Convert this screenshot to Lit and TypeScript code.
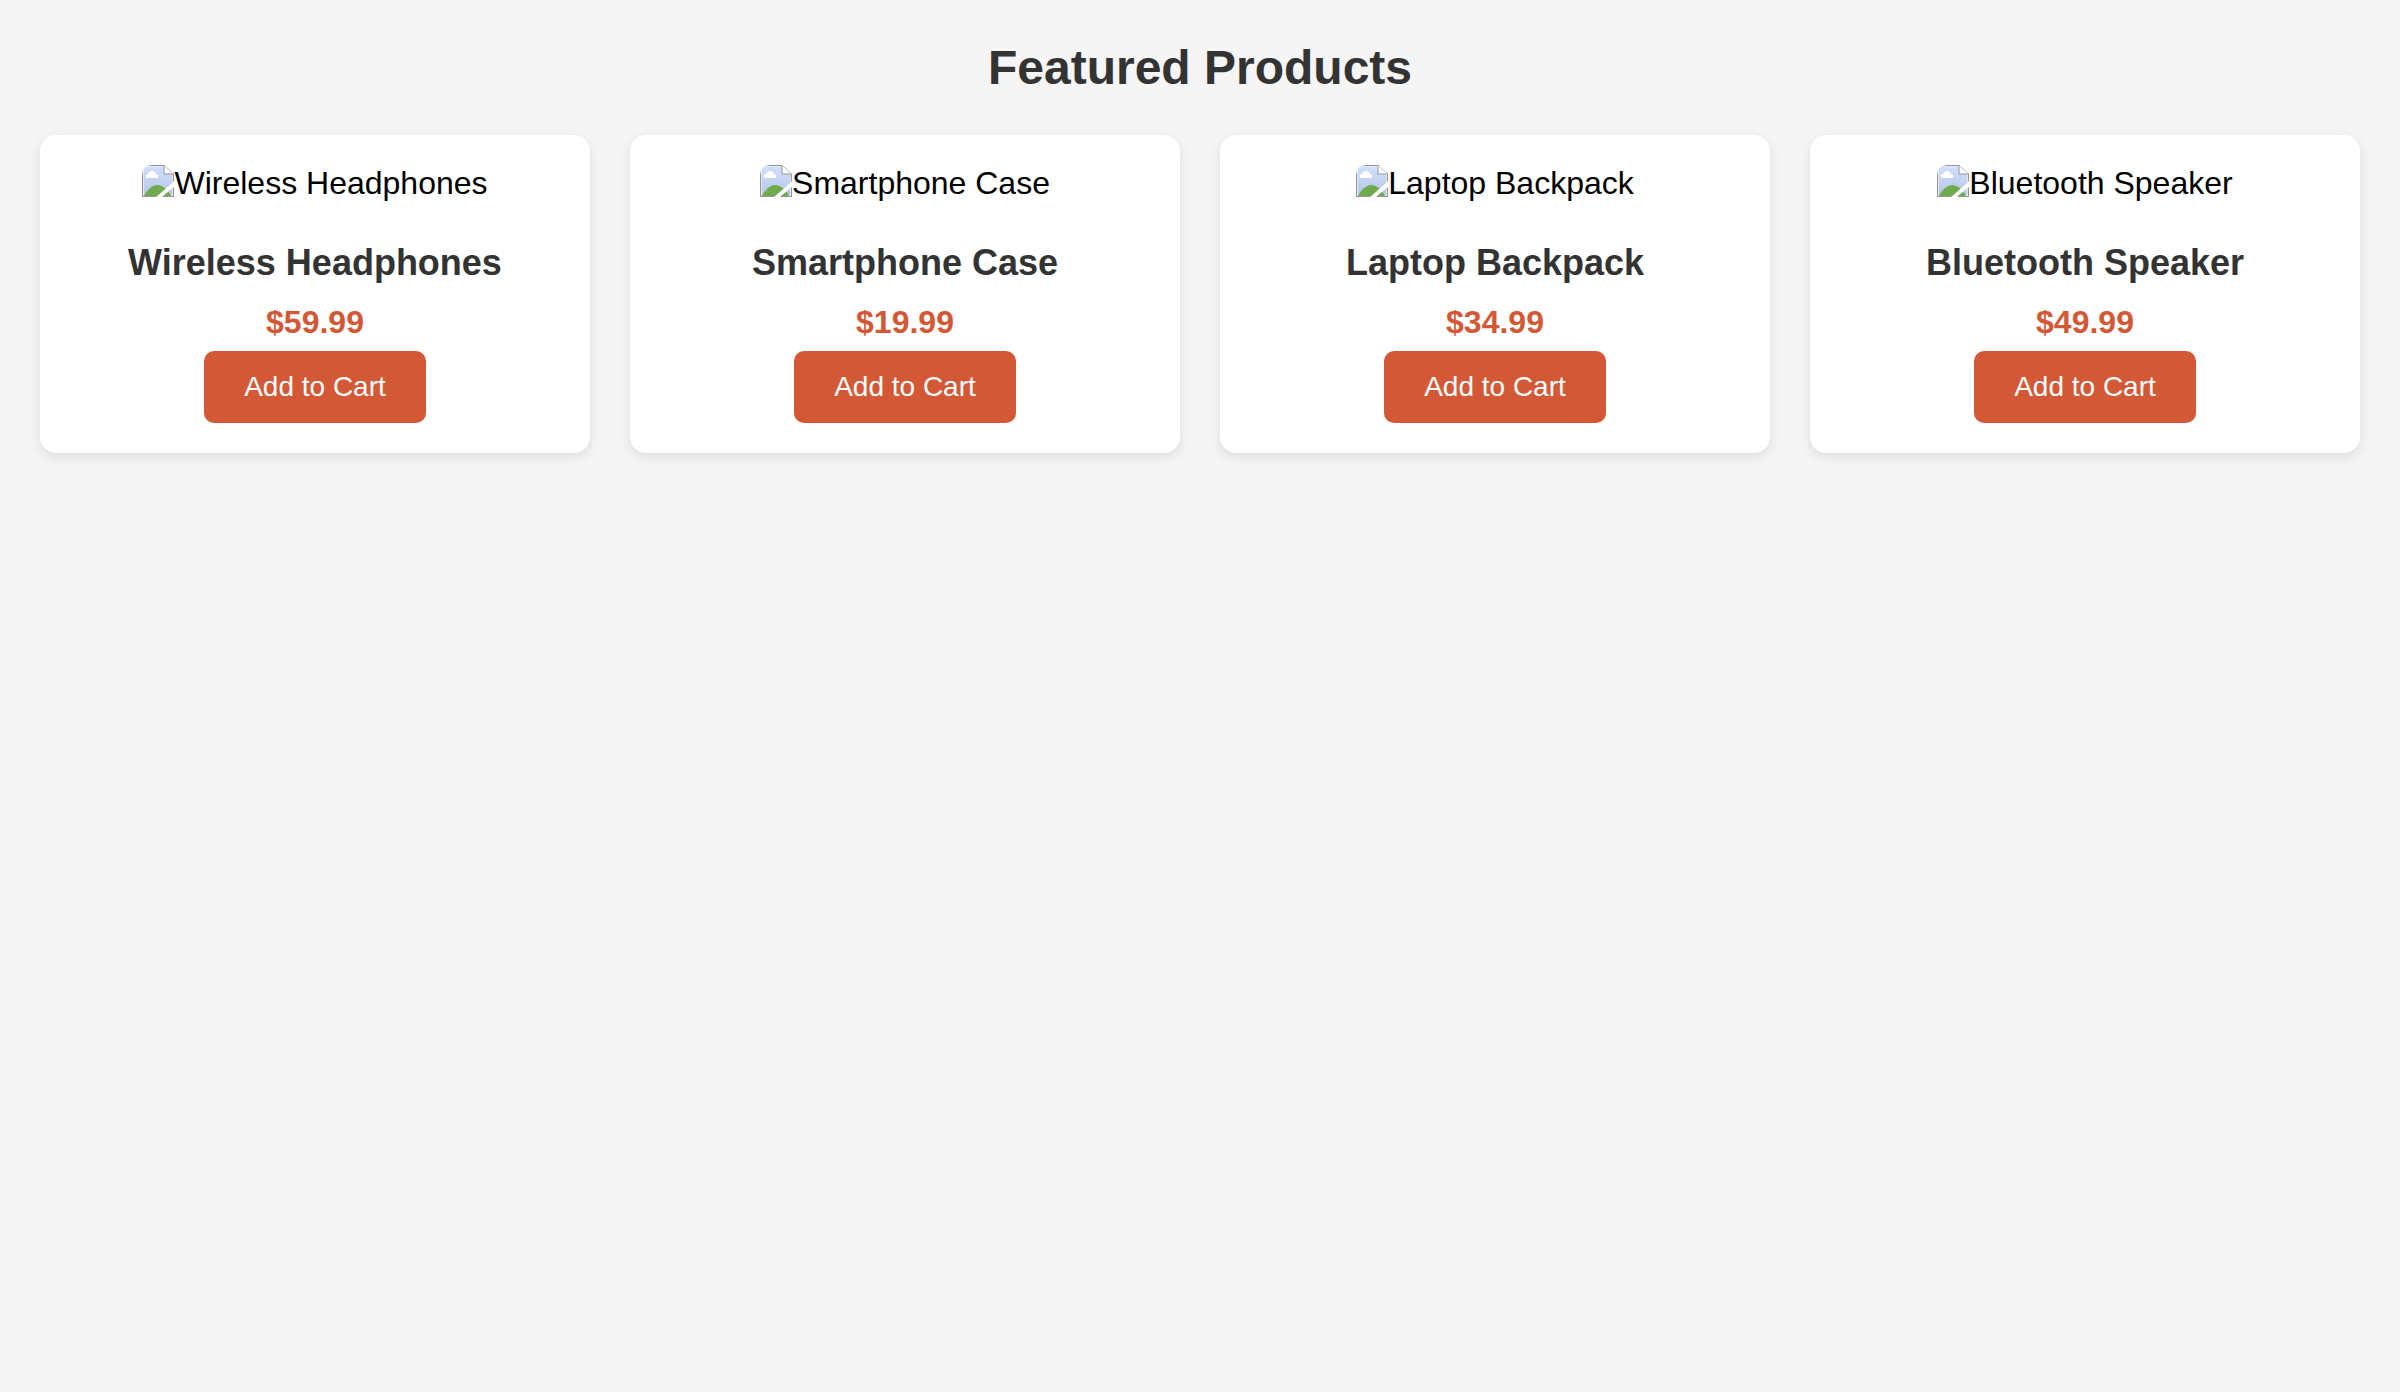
import { LitElement, html, css } from "lit";
import { customElement, property } from "lit/decorators.js";

interface Product {
  name: string;
  price: string;
}

const PRODUCTS: Product[] = [
  { name: "Wireless Headphones", price: "$59.99" },
  { name: "Smartphone Case", price: "$19.99" },
  { name: "Laptop Backpack", price: "$34.99" },
  { name: "Bluetooth Speaker", price: "$49.99" },
];

@customElement("product-card")
export class ProductCard extends LitElement {
  @property() name = "";
  @property() price = "";

  static styles = css`
    :host {
      display: block;
      box-sizing: border-box;
      padding: 30px;
      border-radius: 16px;
      background: #fff;
      box-shadow: 0 4px 12px rgba(0, 0, 0, 0.1);
      text-align: center;
    }
    .picture {
      display: flex;
      justify-content: center;
      color: #000;
      font-size: 32px;
      line-height: 37px;
    }
    .icon {
      width: 32px;
      height: 32px;
      flex: none;
      border-radius: 10px 0 0 0;
    }
    .name {
      margin: 40px 0 20px;
      color: #333;
      font-size: 36px;
      line-height: 42px;
      font-weight: bold;
    }
    .price {
      margin: 0 0 10px;
      color: #d35836;
      font-size: 32px;
      line-height: 37px;
      font-weight: bold;
    }
    .add {
      padding: 20px 40px;
      border: 0;
      border-radius: 10px;
      background: #d35836;
      color: #fff;
      font-family: inherit;
      font-size: 28px;
      line-height: 32px;
      vertical-align: top;
      cursor: pointer;
    }
  `;

  render() {
    return html`
      <div class="picture">
        <svg class="icon" viewBox="0 0 32 32" aria-hidden="true">
          <defs>
            <linearGradient id="sky" gradientUnits="userSpaceOnUse" x1="0" y1="0" x2="0" y2="32">
              <stop offset="0" stop-color="#d3e1fb" />
              <stop offset="1" stop-color="#b3c3e6" />
            </linearGradient>
            <clipPath id="torn">
              <path d="M0 0H22L32 9V16L14 32H0Z" />
              <path d="M32 22V32H20Z" />
            </clipPath>
          </defs>
          <g clip-path="url(#torn)">
            <path d="M0 0H32V32H0Z" fill="#959595" />
            <path d="M1 1H31V31H1Z" fill="#e2eafa" />
            <path d="M2 2H30V30H2Z" fill="url(#sky)" />
            <path d="M2 31C5 25 10 20 15 20C21 20 26 25 29 31Z" fill="#6fab4c" />
            <path d="M5 13C3 13 3 9 6 9C7 5 13 5 14 9C17 9 17 13 15 13Z" fill="#fff" />
            <path d="M22 0V9H32Z" fill="#fff" />
            <path d="M22 0V9H32M22 0L32 9" fill="none" stroke="#959595" stroke-width="1" />
          </g>
        </svg>
        <span>${this.name}</span>
      </div>
      <h2 class="name">${this.name}</h2>
      <p class="price">${this.price}</p>
      <button class="add" type="button">Add to Cart</button>
    `;
  }
}

@customElement("app-root")
export class AppRoot extends LitElement {
  static styles = css`
    :host {
      display: block;
      box-sizing: border-box;
      min-height: 100vh;
      padding: 40px;
      background: #f5f5f5;
      font-family: Arial, "Liberation Sans", sans-serif;
    }
    .title {
      margin: 0 0 40px;
      color: #333;
      font-size: 48px;
      line-height: 55px;
      font-weight: bold;
      text-align: center;
    }
    .grid {
      display: grid;
      grid-template-columns: repeat(auto-fit, minmax(400px, 1fr));
      gap: 40px;
    }
  `;

  render() {
    return html`
      <h1 class="title">Featured Products</h1>
      <main class="grid">
        ${PRODUCTS.map((p) => html`<product-card .name=${p.name} .price=${p.price}></product-card>`)}
      </main>
    `;
  }
}
